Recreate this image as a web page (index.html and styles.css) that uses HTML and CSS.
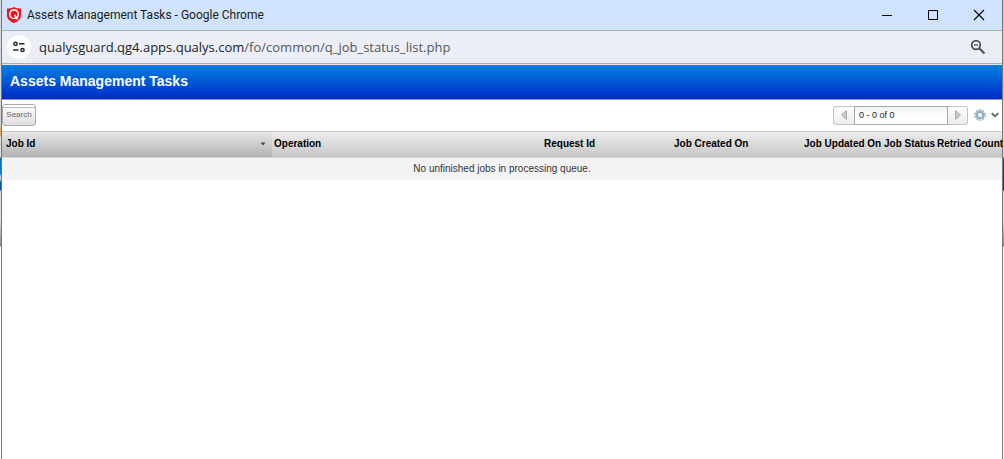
FILE: index.html
```html
<!DOCTYPE html>
<html lang="en">
<head>
<meta charset="utf-8">
<title>Assets Management Tasks</title>
<link rel="stylesheet" href="styles.css">
</head>
<body>
<div class="edge edge-left"></div>
<div class="window">
  <header class="titlebar">
    <svg class="logo" width="14" height="16" viewBox="0 0 14 16" aria-hidden="true">
      <path d="M7 0C9 1 11.5 1.500 14 1.600V8c0 4-3 6.500-7 8-4-1.500-7-4-7-8V1.600C2.500 1.500 5 1 7 0z" fill="#f3121b"/>
      <circle cx="7" cy="7.200" r="4.300" fill="none" stroke="#fff" stroke-width="1.600"/>
      <path d="M7.500 8l3 4.200" stroke="#fff" stroke-width="1.700"/>
    </svg>
    <span class="window-title">Assets Management Tasks - Google Chrome</span>
    <div class="window-controls">
      <button type="button" class="window-button" aria-label="Minimize"><svg width="12" height="12" viewBox="0 0 12 12"><path d="M1 6.500h10" stroke="#000" fill="none"/></svg></button>
      <button type="button" class="window-button" aria-label="Maximize"><svg width="12" height="12" viewBox="0 0 12 12"><path d="M1.500 1.500h9v9h-9z" stroke="#000" fill="none"/></svg></button>
      <button type="button" class="window-button" aria-label="Close"><svg width="12" height="12" viewBox="0 0 12 12"><path d="M1 1l10 10M11 1L1 11" stroke="#000" stroke-width="1.100" fill="none"/></svg></button>
    </div>
  </header>
  <div class="addressbar">
    <button type="button" class="site-info" aria-label="View site information">
      <svg width="14" height="14" viewBox="0 0 14 14" fill="none" stroke="#26282b" stroke-width="1.500"><circle cx="3.500" cy="3.800" r="1.600"/><path d="M7 3.800h5.500M1 10h5.500"/><circle cx="10.500" cy="10" r="1.600"/></svg>
    </button>
    <span class="url"><span class="host">qualysguard.qg4.apps.qualys.com</span>/fo/common/q_job_status_list.php</span>
    <button type="button" class="zoom-button" aria-label="Zoom">
      <svg width="16" height="16" viewBox="0 0 16 16" fill="none" stroke="#4b4e53"><circle cx="6" cy="6" r="4.300" stroke-width="1.700"/><path d="M4 6h4" stroke-width="1.300"/><path d="M9.200 9.200l5.300 5.300" stroke-width="2"/></svg>
    </button>
  </div>
  <main class="page">
    <h1 class="page-title">Assets Management Tasks</h1>
    <div class="toolbar">
      <button type="button" class="search-button">Search</button>
      <div class="toolbar-right">
        <div class="pager">
          <button type="button" class="pager-button previous" aria-label="Previous page"><svg width="8" height="12" viewBox="0 0 8 12"><path d="M6.500 1.500v9L1.500 6z" fill="#ccc" stroke="#aaa"/></svg></button>
          <input class="pager-range" type="text" value="0 - 0 of 0" aria-label="Rows shown" readonly>
          <button type="button" class="pager-button next" aria-label="Next page"><svg width="8" height="12" viewBox="0 0 8 12"><path d="M1.500 1.500v9L6.500 6z" fill="#ccc" stroke="#aaa"/></svg></button>
        </div>
        <button type="button" class="settings" aria-label="Settings">
          <svg width="12" height="12" viewBox="0 0 12 12" fill="none"><circle cx="6" cy="6" r="5.200" stroke="#a9bac8" stroke-width="1.600" stroke-dasharray="2 1.267"/><circle cx="6" cy="6" r="3.300" stroke="#95afc3" stroke-width="2.600"/></svg>
          <svg width="8" height="6" viewBox="0 0 8 6" fill="none"><path d="M.7 1.200L4 4.300l3.300-3.100" stroke="#6c6c6c" stroke-width="1.900"/></svg>
        </button>
      </div>
    </div>
    <table class="jobs">
      <colgroup>
        <col class="col-id"><col class="col-operation"><col class="col-request"><col class="col-created"><col class="col-updated"><col class="col-status"><col class="col-retried">
      </colgroup>
      <thead>
        <tr>
          <th class="sorted" aria-sort="descending"><span class="sort-label">Job Id<svg width="6" height="4" viewBox="0 0 6 4"><path d="M.5.500h5L3 3.500z" fill="#444"/></svg></span></th>
          <th>Operation</th><th>Request Id</th><th>Job Created On</th><th>Job Updated On</th><th>Job Status</th><th>Retried Count</th>
        </tr>
      </thead>
      <tbody>
        <tr><td colspan="7">No unfinished jobs in processing queue.</td></tr>
      </tbody>
    </table>
  </main>
</div>
<div class="edge edge-right"></div>
</body>
</html>
```
FILE: styles.css
```css
* { box-sizing: border-box; }
body {
  display: flex;
  min-height: 100vh;
  margin: 0;
  background: #fff;
  font-family: "Liberation Sans", Arial, sans-serif;
  color: #000;
}
button {
  display: flex;
  align-items: center;
  justify-content: center;
  padding: 0;
  border: 0;
  background: none;
}
svg { display: block; flex: none; }
.edge { flex: none; width: 1px; }
.edge-left {
  background: linear-gradient(#d8d8d8 96px, #d0d0d0 126px, #e4a965 127px, #e4a965 136px, #ddd 137px, #ddd 157px, #0060b8 158px, #0080dc 174px, #bcd 176px, #bcd 180px, #0050b0 182px, #0050b0 190px, #ddd 191px, #ddd 219px, #888 246px, #fff 247px);
}
.edge-right {
  background: linear-gradient(#ccc 100px, #e8dfb8 101px, #ddd 134px, #ddd 157px, #0060b8 158px, #002a88 190px, #ddd 191px, #ddd 219px, #888 246px, #fff 247px);
}
.window {
  display: flex;
  flex: 1;
  flex-direction: column;
  min-width: 0;
  border: solid #777;
  border-width: 0 1px;
}
.titlebar {
  display: flex;
  align-items: center;
  height: 31px;
  padding-left: 5px;
  border-bottom: 1px solid #acb0ac;
  background: #cfe4fc;
}
.window-title {
  flex: 1;
  margin-left: 6px;
  font: 12px/16px Roboto, "Open Sans", sans-serif;
  color: #1b1b1b;
}
.window-controls { display: flex; }
.window-button { width: 46px; height: 30px; }
.addressbar {
  display: flex;
  align-items: center;
  height: 33px;
  padding: 0 16px 0 5px;
  border-bottom: 1px solid #acb0ac;
  background: #ebeef7;
}
.site-info {
  width: 24px;
  height: 24px;
  border-radius: 50%;
  background: #fff;
}
.url {
  flex: 1;
  margin-left: 8px;
  font: 13px/20px "Open Sans", "Noto Sans", sans-serif;
  color: #55585d;
}
.host { color: #202226; }
.page-title {
  margin: 0;
  padding: 0 8px 2px;
  border-top: 1px solid #e8e8e8;
  border-bottom: 1px solid #8a98b0;
  background: linear-gradient(#0082e0, #002bc8);
  font-size: 14px;
  line-height: 32px;
  color: #fff;
}
.toolbar {
  display: flex;
  align-items: center;
  justify-content: space-between;
  height: 31px;
  padding-bottom: 1px;
}
.search-button {
  width: 34px;
  height: 22px;
  border: 1px solid #aaa;
  border-radius: 3px;
  background: linear-gradient(#fff 2px, #bbb 2px, #bbb 3px, #fafafa 3px, #dedede);
  font: 8px/12px "Liberation Sans", Arial, sans-serif;
  color: #666;
}
.toolbar-right {
  display: flex;
  align-items: center;
  gap: 6px;
  padding-right: 3px;
}
.pager { display: flex; }
.pager-button {
  width: 20px;
  height: 19px;
  border: 1px solid #c4c4c4;
  background: linear-gradient(#fff, #ececec);
}
.previous { width: 21px; border-right: 0; border-radius: 3px 0 0 3px; }
.next { border-left: 0; border-radius: 0 3px 3px 0; }
.pager-range {
  width: 94px;
  height: 19px;
  padding: 0 4px;
  border: 1px solid #aaa;
  border-radius: 0;
  background: linear-gradient(#eef3f5, #fff 8px);
  font: 9px/12px "Liberation Sans", Arial, sans-serif;
  color: #222;
}
.settings { gap: 5px; }
.jobs {
  width: 100%;
  border-spacing: 0;
  table-layout: fixed;
}
.col-id { width: 27%; }
.col-operation { width: 27%; }
.col-request { width: 13%; }
.col-created { width: 13%; }
.col-updated { width: 8%; }
.col-status { width: 53px; }
.col-retried { width: 67px; }
.jobs th {
  height: 27px;
  padding: 0 0 2px 2px;
  border-top: 1px solid #c8c8c8;
  border-bottom: 1px solid #d4d4d4;
  background: linear-gradient(#ececec, #c7c7c7);
  font-size: 10px;
  line-height: 12px;
  text-align: left;
  white-space: nowrap;
}
.jobs .sorted {
  padding: 0 6px 2px 4px;
  background: linear-gradient(#e6e6e6, #b2b2b2);
}
.sort-label {
  display: flex;
  align-items: center;
  justify-content: space-between;
}
.jobs td {
  height: 22px;
  padding: 0;
  background: #f3f3f3;
  font-size: 10px;
  line-height: 12px;
  text-align: center;
  color: #333;
}
```
